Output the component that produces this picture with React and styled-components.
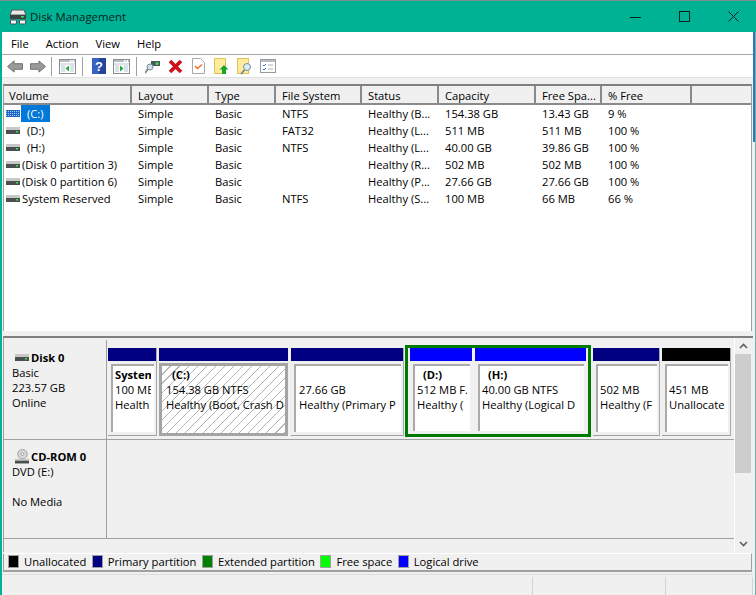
import React from "react";
import styled, { createGlobalStyle } from "styled-components";

const Global = createGlobalStyle`
  html, body { margin: 0; padding: 0; background: #f0f0f0; }
  * { box-sizing: border-box; }
  body { font-family: "Open Sans", "Noto Sans", "Liberation Sans", sans-serif; font-size: 11.2px; color: #000; overflow: hidden; }
`;

const Screen = styled.div`
  width: 756px; height: 595px; overflow: hidden; display: flex; flex-direction: column;
  border-top: 1px solid #7d8f8c; background: #f0f0f0;
`;
const TitleBar = styled.div`
  height: 31px; flex: none; background: #00b294; display: flex; align-items: center; padding-left: 9px; gap: 3px; font-size: 11.4px; color: #06211c;
`;
const TitleText = styled.span` flex: 1; `;
const WinBtn = styled.div`
  width: 46px; height: 31px; display: flex; align-items: center; justify-content: center;
`;
const Body = styled.div`
  flex: 1; min-height: 0; display: flex;
`;
const Frame = styled.div`
  flex: 1; min-width: 0; display: flex; flex-direction: column;
  border-left: 2px solid #00b294; background: #f0f0f0;
`;
const DesktopEdge = styled.div`
  width: 3px; flex: none; border-right: 1px solid #5fb9a6;
  background: linear-gradient(to bottom, #2f7ab5 0 110px, #f0f0f0 110px);
`;
const MenuBar = styled.div`
  height: 23px; flex: none; background: #fff; border-bottom: 1px solid #a8a8a8; display: flex; align-items: center; padding-left: 9px; gap: 17px;
`;
const ToolBar = styled.div`
  height: 23px; flex: none; background: #fff; display: flex; align-items: center; padding-left: 1px;
  border-bottom: 1px solid #e2e2e2;
`;
const Tool = styled.div`
  width: 23px; height: 22px; flex: none; display: flex; align-items: center; justify-content: center;
`;
const ToolSep = styled.div`
  width: 1px; height: 19px; flex: none; background: #a0a0a0; margin: 0 4px 0 ${p => p.$ml || 3}px;
`;
const ListPanel = styled.div`
  margin: 6px 1px 0 1px; height: 247px; flex: none; background: #fff; border-top: 2px solid #808080; border-left: 1px solid #a0a0a0; border-right: 1px solid #a0a0a0;
`;
const HeaderRow = styled.div`
  display: flex; height: 19px; background: #f0f0f0; border-bottom: 2px solid #8a8a8a;
`;
const HeaderCell = styled.div`
  width: ${p => p.$w}px; flex: none; padding: 1px 0 0 ${p => p.$pl || 6}px; line-height: 17px; border-right: 2px solid #8a8a8a; white-space: nowrap; overflow: hidden;
`;
const Row = styled.div`
  display: flex; height: 17px; align-items: center; background: #fff;
`;
const Cell = styled.div`
  width: ${p => p.$w}px; flex: none; padding-left: 6px; white-space: nowrap; overflow: hidden; line-height: 17px;
`;
const VolumeCell = styled.div`
  width: 128px; flex: none; display: flex; align-items: center; padding-left: 2px; line-height: 17px; white-space: nowrap;
`;
const VolumeName = styled.span`
  padding: 0 ${p => p.$sel ? "6px" : "1px"} 0 ${p => p.$letter ? "6px" : "1px"};
  margin-left: 1px; background: ${p => p.$sel ? "#0078d7" : "transparent"}; color: ${p => p.$sel ? "#fff" : "#000"};
`;
const Splitter = styled.div`
  height: 5px; flex: none; background: #f0f0f0;
`;
const DiskPanel = styled.div`
  height: 216px; flex: none; margin-left: 1px; border-top: 2px solid #808080; border-left: 1px solid #a0a0a0; display: flex; background: #f0f0f0;
`;
const DiskRows = styled.div`
  flex: 1; min-width: 0; display: flex; flex-direction: column; padding-top: 2px;
`;
const DiskRow = styled.div`
  height: ${p => p.$h}px; flex: none; display: flex; border-bottom: 1px solid #a0a0a0;
`;
const DiskLabel = styled.div`
  width: 103px; flex: none; border-right: 1px solid #a0a0a0; padding: ${p => p.$top}px 0 0 8px; line-height: 15px;
`;
const DiskName = styled.div`
  display: flex; align-items: center; gap: 2px; font-weight: 700; height: 16px; margin-left: 3px;
`;
const Blank = styled.div` height: 15px; `;
const Partitions = styled.div`
  flex: 1; display: flex; align-items: flex-start; padding: 5px 0 0 1px;
`;
const Partition = styled.div`
  width: ${p => p.$w}px; flex: none; height: ${p => p.$h}px; margin-top: ${p => p.$mt}px; display: flex; flex-direction: column;
  border-right: ${p => p.$edge ? "1px solid #a8a8a8" : "none"};
  border-bottom: ${p => p.$edge ? "1px solid #a0a0a0" : "none"};
  margin-right: ${p => p.$mr}px;
`;
const Bar = styled.div`
  height: 13px; flex: none; background: ${p => p.$c};
`;
const BoxOuter = styled.div`
  flex: 1; min-height: 0; padding: 3px 2px 3px 3px;
`;
const SelectedOuter = styled.div`
  flex: 1; min-height: 0; margin-top: 2px;
`;
const BoxInner = styled.div`
  height: 100%; background: #fff; border-left: 2px solid #aaaaaa; border-top: 2px solid #aaaaaa; padding: 1px ${p => p.$pr ?? 3}px 0 2px; overflow: hidden; line-height: 15px;
`;
const SelectedBox = styled.div`
  height: 100%; border: 3px solid #a4a4a4; padding: 1px 1px 0 4px; overflow: hidden; line-height: 15px;
  background-color: #fff;
  background-image: repeating-linear-gradient(135deg, transparent 0 5.6px, #b4b4b4 5.6px 6.4px);
`;
const Line = styled.div`
  white-space: nowrap; overflow: hidden; height: 15px; font-weight: ${p => p.$b ? 700 : 400}; padding-left: ${p => p.$pl || 0}px;
`;
const Extended = styled.div`
  display: flex; flex: none; height: 92px; margin: 0 2px 0 1px; border: 3px solid #007a00; padding: 0 2px;
`;
const Legend = styled.div`
  height: 19px; flex: none; margin: 1px 1px 0 1px; display: flex; align-items: center; padding: 0 0 1px 4px; border-top: 1px solid #fff; border-bottom: 2px solid #a0a0a0; border-left: 1px solid #a0a0a0; border-right: 1px solid #a0a0a0;
`;
const LegendItem = styled.div`
  display: flex; align-items: center; gap: 5px; margin-right: 5.5px;
`;
const Swatch = styled.div`
  width: 11px; height: 13px; background: ${p => p.$c}; border: 1px solid #a0a0a0;
`;
const Scrollbar = styled.div`
  width: 17px; flex: none; display: flex; flex-direction: column; background: #f0f0f0; margin-right: 2px; border-left: 1px solid #fff;
`;
const ScrollArrow = styled.div`
  height: 16px; flex: none; display: flex; align-items: center; justify-content: center; background: #f0f0f0;
`;
const ScrollThumb = styled.div`
  height: 119px; flex: none; background: #cdcdcd;
`;
const ScrollTrack = styled.div` flex: 1; background: #f0f0f0; `;
const StatusBar = styled.div`
  flex: 1; display: flex; border-top: 1px solid #dcdcdc; margin-top: 2px;
`;
const StatusCell = styled.div`
  width: ${p => p.$w}px; flex: none; border-right: 1px solid #d4d4d4; margin-top: 2px;
`;

const Arrow = ({ flip }) => (
  <svg width="18" height="15" viewBox="0 0 18 16" style={flip ? { transform: "scaleX(-1)" } : undefined}>
    <path d="M1 8 8 2v3h9v6H8v3z" fill="#9a9a9a" stroke="#6e6e6e" />
  </svg>
);
const PaneIcon = ({ right }) => (
  <svg width="17" height="15" viewBox="0 0 17 15">
    <rect x=".5" y=".5" width="16" height="14" fill="#fff" stroke="#8c8c8c" />
    <rect x="1" y="1" width="15" height="2" fill="#b5bdc6" />
    <rect x="11" y="1" width="1.5" height="2" fill="#fff" /><rect x="13.5" y="1" width="1.5" height="2" fill="#fff" />
    <path d="M1 5h15" stroke="#b9c6cf" />
    <rect x={right ? 11 : 2} y="6" width="4" height="7" fill="#d9e3ea" />
    <rect x={right ? 2 : 11} y="6" width="4" height="7" fill="#d9e3ea" />
    <path d={right ? "M7 6.5 10.5 9.5 7 12.5z" : "M10 6.5 6.5 9.5 10 12.5z"} fill="#22a83a" />
  </svg>
);
const HelpIcon = () => (
  <svg width="14" height="16" viewBox="0 0 14 16">
    <rect width="14" height="16" fill="#23449c" />
    <rect width="7" height="16" fill="#3a62c0" />
    <text x="7" y="13" textAnchor="middle" fill="#fff" fontSize="13" fontWeight="700" fontFamily="Liberation Sans">?</text>
  </svg>
);
const ConnectIcon = () => (
  <svg width="16" height="16" viewBox="0 0 16 16">
    <path d="M6 3h9v5H6z" fill="#4c5a5c" />
    <circle cx="12" cy="5.5" r="1.5" fill="#3be05a" />
    <circle cx="5" cy="9" r="3" fill="#cfe0ea" stroke="#7d8d98" />
    <path d="M3 11 0 15" stroke="#85878a" strokeWidth="2" />
  </svg>
);
const RedX = () => (
  <svg width="15" height="15" viewBox="0 0 15 15">
    <path d="M2 2l11 11M13 2 2 13" stroke="#d0101a" strokeWidth="3.6" />
  </svg>
);
const CheckDoc = () => (
  <svg width="13" height="16" viewBox="0 0 13 16">
    <path d="M.5.5h8l4 4v11H.5z" fill="#fff" stroke="#a8a8a8" />
    <path d="M3 8l2.5 2.5L10 6.5" fill="none" stroke="#e8742c" strokeWidth="1.5" />
  </svg>
);
const FolderUp = () => (
  <svg width="15" height="17" viewBox="0 0 15 17">
    <rect x=".5" y=".5" width="11" height="15" fill="#ffeb9c" stroke="#e0c25a" />
    <path d="M10 7l4.5 4.5H12V16H8v-4.5H5.5z" fill="#1ea32e" />
  </svg>
);
const FolderFind = () => (
  <svg width="15" height="17" viewBox="0 0 15 17">
    <rect x=".5" y=".5" width="11" height="15" fill="#ffeb9c" stroke="#e0c25a" />
    <circle cx="10" cy="9" r="3.5" fill="#dcecf6" stroke="#7b8ea0" />
    <path d="M7.5 12 4 16" stroke="#6e7f90" strokeWidth="1.6" />
  </svg>
);
const ChecklistIcon = () => (
  <svg width="16" height="14" viewBox="0 0 16 14">
    <rect x=".5" y=".5" width="15" height="13" fill="#fff" stroke="#9a9a9a" />
    <path d="M1 2h14" stroke="#b5bdc6" strokeWidth="2" />
    <path d="M3 6l1 1 2-2M3 10l1 1 2-2" stroke="#2a6fd0" fill="none" />
    <path d="M8 6h5M8 10h5" stroke="#a8b2bb" />
  </svg>
);
const Drive = ({ blue }) => blue ? (
  <svg width="14" height="9" viewBox="0 0 14 9">
    <rect y="1" width="14" height="7" fill="#1f63c4" />
    <path d="M0 2.5h14M0 4.5h14M0 6.5h14" stroke="#9fd0f5" strokeDasharray="1 1" />
  </svg>
) : (
  <svg width="14" height="9" viewBox="0 0 14 9">
    <rect y="1" width="14" height="3" fill="#c8c8c8" />
    <rect y="4" width="14" height="4" fill="#4a4f4f" />
    <rect x="10" y="5" width="2" height="1.5" fill="#3be05a" />
  </svg>
);
const CdIcon = () => (
  <svg width="14" height="16" viewBox="0 0 15 16">
    <circle cx="8" cy="6" r="5" fill="#d8d8d8" stroke="#9a9a9a" />
    <circle cx="8" cy="6" r="1.5" fill="#fff" stroke="#9a9a9a" />
    <rect x="0" y="11" width="15" height="2" fill="#c8c8c8" />
    <rect x="0" y="13" width="15" height="3" fill="#4a4f4f" />
  </svg>
);
const AppIcon = () => (
  <svg width="18" height="16" viewBox="0 0 18 16">
    <path d="M3 1h12l2 5H1z" fill="#e9e9e9" stroke="#5a5a5a" />
    <rect x="1" y="6" width="16" height="4" fill="#3c4242" />
    <rect x="12" y="7" width="3" height="1.5" fill="#3be05a" />
    <rect x="1.5" y="11" width="6" height="4" rx="1" fill="#f4f4f4" stroke="#4c4c4c" />
    <rect x="10.5" y="11" width="6" height="4" rx="1" fill="#f4f4f4" stroke="#4c4c4c" />
  </svg>
);

const widths = [128, 77, 67, 86, 77, 97, 66, 90];
const headers = ["Volume", "Layout", "Type", "File System", "Status", "Capacity", "Free Spa...", "% Free"];
const rows = [
  ["(C:)", "Simple", "Basic", "NTFS", "Healthy (B...", "154.38 GB", "13.43 GB", "9 %"],
  ["(D:)", "Simple", "Basic", "FAT32", "Healthy (L...", "511 MB", "511 MB", "100 %"],
  ["(H:)", "Simple", "Basic", "NTFS", "Healthy (L...", "40.00 GB", "39.86 GB", "100 %"],
  ["(Disk 0 partition 3)", "Simple", "Basic", "", "Healthy (R...", "502 MB", "502 MB", "100 %"],
  ["(Disk 0 partition 6)", "Simple", "Basic", "", "Healthy (P...", "27.66 GB", "27.66 GB", "100 %"],
  ["System Reserved", "Simple", "Basic", "NTFS", "Healthy (S...", "100 MB", "66 MB", "66 %"],
];
const legend = [
  ["#000", "Unallocated"], ["#000080", "Primary partition"], ["#008000", "Extended partition"],
  ["#00ff00", "Free space"], ["#0000ff", "Logical drive"],
];

const Plain = ({ w, c = "#000080", lines, mr, pr }) => (
  <Partition $w={w} $mr={mr} $edge $mt={3} $h={88}>
    <Bar $c={c} />
    <BoxOuter><BoxInner $pr={pr}>{lines}</BoxInner></BoxOuter>
  </Partition>
);
const Logical = ({ w, lines, mr }) => (
  <Partition $w={w} $mr={mr} $mt={0} $h={86}>
    <Bar $c="#0000ff" />
    <BoxOuter><BoxInner>{lines}</BoxInner></BoxOuter>
  </Partition>
);

export default function App() {
  return (
    <Screen>
      <Global />
      <TitleBar>
        <AppIcon />
        <TitleText>Disk Management</TitleText>
        <WinBtn><svg width="11" height="2"><rect width="11" height="1" y="1" fill="#06211c" /></svg></WinBtn>
        <WinBtn><svg width="11" height="11"><rect x=".5" y=".5" width="10" height="10" fill="none" stroke="#06211c" /></svg></WinBtn>
        <WinBtn><svg width="11" height="11"><path d="M.5.5l10 10M10.5.5l-10 10" stroke="#06211c" fill="none" /></svg></WinBtn>
      </TitleBar>
      <Body>
        <Frame>
          <MenuBar><span>File</span><span>Action</span><span>View</span><span>Help</span></MenuBar>
          <ToolBar>
            <Tool><Arrow /></Tool><Tool><Arrow flip /></Tool>
            <ToolSep $ml={2} />
            <Tool><PaneIcon /></Tool>
            <ToolSep />
            <Tool><HelpIcon /></Tool><Tool><PaneIcon right /></Tool>
            <ToolSep />
            <Tool><ConnectIcon /></Tool><Tool><RedX /></Tool><Tool><CheckDoc /></Tool><Tool><FolderUp /></Tool><Tool><FolderFind /></Tool><Tool><ChecklistIcon /></Tool>
          </ToolBar>
          <ListPanel>
            <HeaderRow>
              {headers.map((h, i) => <HeaderCell key={h} $w={widths[i]} $pl={i === 0 ? 5 : 6}>{h}</HeaderCell>)}
            </HeaderRow>
            {rows.map((r, i) => (
              <Row key={r[0]}>
                <VolumeCell>
                  <Drive blue={i === 0} />
                  <VolumeName $sel={i === 0} $letter={i < 3}>{r[0]}</VolumeName>
                </VolumeCell>
                {r.slice(1).map((c, j) => <Cell key={j} $w={widths[j + 1]}>{c}</Cell>)}
              </Row>
            ))}
          </ListPanel>
          <Splitter />
          <DiskPanel>
            <DiskRows>
              <DiskRow $h={100}>
                <DiskLabel $top={9}>
                  <DiskName><Drive />Disk 0</DiskName>
                  <div>Basic</div><div>223.57 GB</div><div>Online</div>
                </DiskLabel>
                <Partitions>
                  <Plain w={49} mr={2} lines={<><Line $b>System</Line><Line>100 MB</Line><Line>Health</Line></>} />
                  <Partition $w={129} $h={88} $mt={3} $mr={3}>
                    <Bar $c="#000080" />
                    <SelectedOuter>
                      <SelectedBox>
                        <Line $b $pl={6}>(C:)</Line>
                        <Line>154.38 GB NTFS</Line>
                        <Line>Healthy (Boot, Crash D</Line>
                      </SelectedBox>
                    </SelectedOuter>
                  </Partition>
                  <Plain w={113} mr={0} lines={<><Blank /><Line $pl={1}>27.66 GB</Line><Line $pl={1}>Healthy (Primary P</Line></>} />
                  <Extended>
                    <Logical w={62} mr={3} lines={<><Line $b $pl={6}>(D:)</Line><Line>512 MB F.</Line><Line>Healthy (</Line></>} />
                    <Logical w={111} mr={0} lines={<><Line $b $pl={6}>(H:)</Line><Line>40.00 GB NTFS</Line><Line>Healthy (Logical D</Line></>} />
                  </Extended>
                  <Plain w={67} mr={2} lines={<><Blank /><Line>502 MB</Line><Line>Healthy (F</Line></>} />
                  <Plain w={69} c="#000" mr={0} pr={1} lines={<><Blank /><Line>451 MB</Line><Line>Unallocate</Line></>} />
                </Partitions>
              </DiskRow>
              <DiskRow $h={99}>
                <DiskLabel $top={8}>
                  <DiskName><CdIcon />CD-ROM 0</DiskName>
                  <div>DVD (E:)</div><Blank /><div>No Media</div>
                </DiskLabel>
              </DiskRow>
            </DiskRows>
            <Scrollbar>
              <ScrollArrow><svg width="9" height="6"><path d="M1 5l3.5-3.5L8 5" fill="none" stroke="#606060" strokeWidth="1.6" /></svg></ScrollArrow>
              <ScrollThumb />
              <ScrollTrack />
              <ScrollArrow><svg width="9" height="6"><path d="M1 1l3.5 3.5L8 1" fill="none" stroke="#606060" strokeWidth="1.6" /></svg></ScrollArrow>
            </Scrollbar>
          </DiskPanel>
          <Legend>
            {legend.map(([c, t]) => <LegendItem key={t}><Swatch $c={c} />{t}</LegendItem>)}
          </Legend>
          <StatusBar>
            <StatusCell $w={531} /><StatusCell $w={133} /><StatusCell $w={87} />
          </StatusBar>
        </Frame>
        <DesktopEdge />
      </Body>
    </Screen>
  );
}
